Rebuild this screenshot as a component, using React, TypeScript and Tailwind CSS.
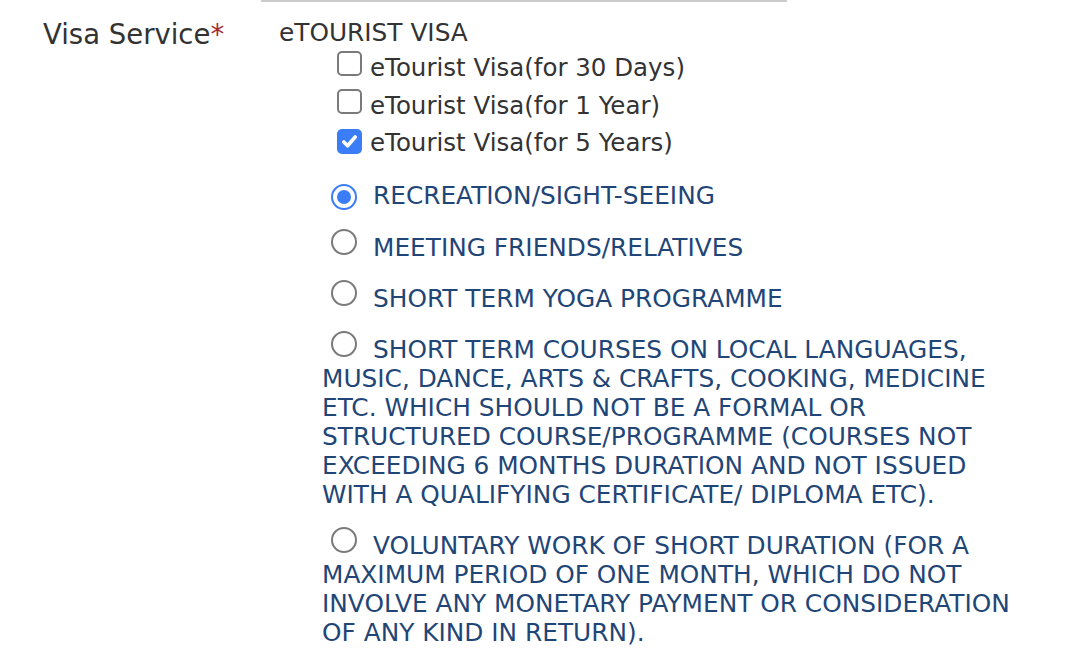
import { FC } from 'react';

type Purpose = {
  id: string;
  label: string;
  checked?: boolean;
};

const visaTypes = [
  { id: '30d', label: 'eTourist Visa(for 30 Days)', checked: false },
  { id: '1y', label: 'eTourist Visa(for 1 Year)', checked: false },
  { id: '5y', label: 'eTourist Visa(for 5 Years)', checked: true },
];

const purposes: Purpose[] = [
  { id: 'rec', label: 'RECREATION/SIGHT-SEEING', checked: true },
  { id: 'meet', label: 'MEETING FRIENDS/RELATIVES' },
  { id: 'yoga', label: 'SHORT TERM YOGA PROGRAMME' },
  {
    id: 'courses',
    label:
      'SHORT TERM COURSES ON LOCAL LANGUAGES, MUSIC, DANCE, ARTS & CRAFTS, COOKING, MEDICINE ETC. WHICH SHOULD NOT BE A FORMAL OR STRUCTURED COURSE/PROGRAMME (COURSES NOT EXCEEDING 6 MONTHS DURATION AND NOT ISSUED WITH A QUALIFYING CERTIFICATE/ DIPLOMA ETC).',
  },
  {
    id: 'voluntary',
    label:
      'VOLUNTARY WORK OF SHORT DURATION (FOR A MAXIMUM PERIOD OF ONE MONTH, WHICH DO NOT INVOLVE ANY MONETARY PAYMENT OR CONSIDERATION OF ANY KIND IN RETURN).',
  },
];

const CheckBox: FC<{ checked: boolean }> = ({ checked }) =>
  checked ? (
    <span className="flex h-[25px] w-[25px] shrink-0 items-center justify-center rounded-[5px] bg-[#3a7df6]">
      <svg width="19" height="19" viewBox="0 0 16 16" fill="none">
        <path
          d="M3.2 8.4 6.4 11.6 12.8 4.2"
          stroke="white"
          strokeWidth="3"
          strokeLinecap="round"
          strokeLinejoin="round"
        />
      </svg>
    </span>
  ) : (
    <span className="block h-[25px] w-[25px] shrink-0 rounded-[5px] border-2 border-[#7a7a7a] bg-white" />
  );

const Radio: FC<{ checked?: boolean }> = ({ checked }) =>
  checked ? (
    <span className="mb-[1px] ml-[9px] mr-[16px] inline-flex h-[26px] w-[26px] items-center justify-center rounded-full border-[2.5px] border-[#3a7df6] bg-white align-baseline">
      <span className="block h-[14px] w-[14px] rounded-full bg-[#3a7df6]" />
    </span>
  ) : (
    <span className="mb-[1px] ml-[9px] mr-[16px] inline-block h-[26px] w-[26px] rounded-full border-2 border-[#7a7a7a] bg-white align-baseline" />
  );

const App: FC = () => {
  return (
    <div className="h-[648px] w-[1070px] overflow-hidden bg-white font-['DejaVu_Sans',Verdana,sans-serif] text-[#333333]">
      <div className="flex">
        <div className="w-[261px] shrink-0 pl-[43px] pt-[18px] text-[27.5px] leading-[32px]">
          Visa Service<span className="text-[#a52a2a]">*</span>
        </div>

        <div className="w-[780px]">
          <div className="h-[2px] w-[526px] bg-[#cccccc]" />
          <div className="pl-[18px] pt-[17px] text-[24.8px] leading-[28px]">
            eTOURIST VISA
          </div>

          <div className="flex flex-col pl-[76px] pt-[3px] text-[24.5px]">
            {visaTypes.map((v) => (
              <label key={v.id} className="flex h-[37.7px] items-baseline gap-[8px]">
                <CheckBox checked={v.checked} />
                <span>{v.label}</span>
              </label>
            ))}
          </div>

          <div className="flex w-[764px] flex-col gap-[18px] pl-[61px] pt-[18px] text-[24.8px] leading-[29px] text-[#1f4677]">
            {purposes.map((p) => (
              <div key={p.id}>
                <Radio checked={p.checked} />
                {p.label}
              </div>
            ))}
          </div>
        </div>
      </div>
    </div>
  );
};

export default App;
